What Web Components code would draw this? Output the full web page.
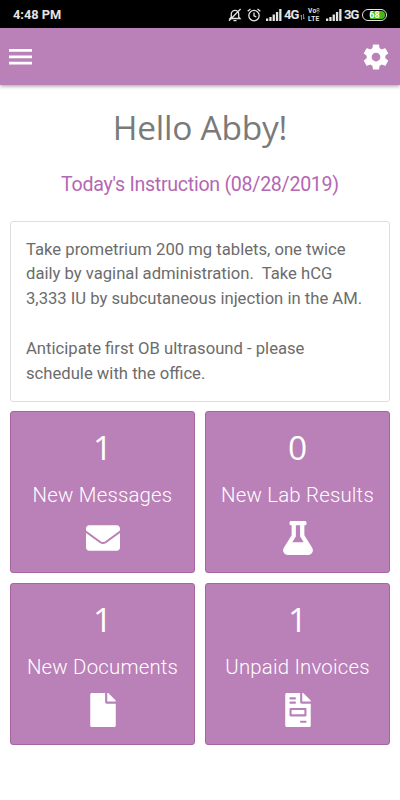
<!DOCTYPE html>
<html lang="en">
<head>
<meta charset="utf-8">
<meta name="viewport" content="width=device-width, initial-scale=1">
<title>Hello Abby!</title>
<style>
  body {
    margin: 0;
    background: #fff;
    font-family: Roboto, "Liberation Sans", sans-serif;
    color: #666;
  }
</style>
</head>
<body>
<patient-home></patient-home>

<script>
const ICONS = {
  menu: ['0 0 24 17', 'M0 0h23v2.8H0zM0 6.4h23v2.8H0zM0 12.8h23v2.8H0z'],
  gear: ['0 0 24 24', 'M19.43 12.98c.04-.32.07-.64.07-.98s-.03-.66-.07-.98l2.11-1.65c.19-.15.24-.42.12-.64l-2-3.46c-.12-.22-.39-.3-.61-.22l-2.49 1c-.52-.4-1.08-.73-1.69-.98l-.38-2.65C14.46 2.18 14.25 2 14 2h-4c-.25 0-.46.18-.49.42l-.38 2.65c-.61.25-1.17.59-1.69.98l-2.49-1c-.23-.09-.49 0-.61.22l-2 3.46c-.13.22-.07.49.12.64l2.11 1.65c-.04.32-.07.65-.07.98s.03.66.07.98l-2.11 1.65c-.19.15-.24.42-.12.64l2 3.46c.12.22.39.3.61.22l2.49-1c.52.4 1.08.73 1.69.98l.38 2.65c.03.24.24.42.49.42h4c.25 0 .46-.18.49-.42l.38-2.65c.61-.25 1.17-.59 1.69-.98l2.49 1c.23.09.49 0 .61-.22l2-3.46c.12-.22.07-.49-.12-.64l-2.11-1.65zM12 15.5c-1.93 0-3.5-1.57-3.5-3.5s1.57-3.5 3.5-3.5 3.5 1.57 3.5 3.5-1.57 3.5-3.5 3.5z'],
  envelope: ['0 0 512 512', 'M48 64C21.5 64 0 85.500 0 112v18c0 8 4 15 10 20l216 158c18 13 42 13 60 0l216-158c6-5 10-12 10-20v-18c0-26.500-21.500-48-48-48zM0 179v221c0 26.500 21.500 48 48 48h416c26.500 0 48-21.500 48-48V179L304 331c-29 21-67 21-96 0z'],
  flask: ['0 0 448 512', 'M437.2 403.5L320 215V64h8c13.3 0 24-10.7 24-24V24c0-13.3-10.7-24-24-24H120c-13.3 0-24 10.7-24 24v16c0 13.3 10.7 24 24 24h8v151L10.8 403.5C-18.5 450.6 15.3 512 70.9 512h306.2c55.7 0 89.4-61.5 60.1-108.5zM137.900 320l48.2-77.6c3.7-5.2 5.8-11.6 5.8-18.4V64h64v160c0 6.9 2.2 13.2 5.8 18.4l48.2 77.6h-172z'],
  file: ['0 0 384 512', 'M224 136V0H24C10.7 0 0 10.7 0 24v464c0 13.3 10.7 24 24 24h336c13.3 0 24-10.7 24-24V160H248c-13.2 0-24-10.8-24-24zm160-14.1v6.1H256V0h6.1c6.4 0 12.5 2.5 17 7l97.9 98c4.5 4.5 7 10.6 7 16.9z'],
  invoice: ['0 0 384 512', 'M288 256H96v64h192v-64zm89-151L279.1 7c-4.5-4.5-10.6-7-17-7H256v128h128v-6.1c0-6.3-2.5-12.4-7-16.9zm-153 31V0H24C10.7 0 0 10.7 0 24v464c0 13.3 10.7 24 24 24h336c13.3 0 24-10.7 24-24V160H248c-13.2 0-24-10.8-24-24zM64 72c0-4.42 3.58-8 8-8h80c4.42 0 8 3.58 8 8v16c0 4.42-3.58 8-8 8H72c-4.42 0-8-3.58-8-8V72zm0 64c0-4.42 3.58-8 8-8h80c4.42 0 8 3.58 8 8v16c0 4.42-3.58 8-8 8H72c-4.42 0-8-3.58-8-8v-16zm256 304c0 4.42-3.58 8-8 8h-80c-4.42 0-8-3.58-8-8v-16c0-4.42 3.58-8 8-8h80c4.42 0 8 3.58 8 8v16zm0-200v96c0 8.84-7.16 16-16 16H80c-8.84 0-16-7.16-16-16v-96c0-8.84 7.16-16 16-16h224c8.84 0 16 7.16 16 16z'],
  signal: ['0 0 16 12', 'M0 9.500h2.300V12H0zM3.300 8h2.300v4H3.300zM6.600 5.500h2.300V12H6.600zM9.900 3h2.300v9H9.900zM13.200 0h2.300v12h-2.300z'],
};

class AppIcon extends HTMLElement {
  connectedCallback() {
    const [viewBox, path] = ICONS[this.getAttribute('name')];
    this.attachShadow({ mode: 'open' }).innerHTML = `
      <style>
        :host { display: block; }
        svg { display: block; width: 100%; height: 100%; fill: currentColor; }
      </style>
      <svg viewBox="${viewBox}"><path d="${path}"/></svg>
    `;
  }
}

class StatusBar extends HTMLElement {
  connectedCallback() {
    this.attachShadow({ mode: 'open' }).innerHTML = `
      <style>
        :host {
          display: flex;
          align-items: center;
          box-sizing: border-box;
          height: 28px;
          padding: 1px 13px 0;
          background: #000;
          color: #e4e4e4;
          font-size: 12.8px;
          font-weight: 700;
          line-height: 14px;
        }
        .time { margin-right: auto; }
        svg { display: block; fill: none; stroke: currentColor; stroke-width: 1.3; }
        .bell, .alarm { margin-right: 5px; }
        app-icon { width: 16px; height: 12px; margin-right: 2px; }
        .net { width: 15px; font-size: 13px; letter-spacing: -.9px; }
        .arrows { margin: 5px 3px 0 1px; stroke-width: .8; opacity: .75; }
        .volte { width: 14px; margin-right: 4px; }
        .volte div {
          display: flex;
          height: 8px;
          font-size: 6.6px;
          line-height: 8px;
          letter-spacing: .3px;
        }
        .volte svg { margin-top: 1px; stroke-width: .9; }
        .battery {
          display: flex;
          align-items: center;
          justify-content: center;
          box-sizing: border-box;
          width: 25px;
          height: 12px;
          margin-left: 3px;
          padding: 1px;
          border: 1px solid #e4e4e4;
          border-radius: 6px;
          background: linear-gradient(90deg, #000 30%, #45b913 30%) content-box;
          color: #fff;
          font-size: 9px;
          line-height: 10px;
        }
      </style>
      <span class="time">4:48 PM</span>
      <svg class="bell" width="14" height="14" viewBox="0 0 14 14"><path d="M2 10.5h10L10.700 9V6a3.700 3.700 0 0 0-7.400 0v3zM5.500 12.700h3M12.600 1L1 12.800"/></svg>
      <svg class="alarm" width="14" height="14" viewBox="0 0 14 14"><circle cx="7" cy="7.6" r="5.2"/><path d="M7 4.600v3.300l2.300 1M.7 3.300L3.500 1M13.300 3.300L10.500 1"/></svg>
      <app-icon name="signal"></app-icon>
      <span class="net">4G</span>
      <svg class="arrows" width="5" height="6" viewBox="0 0 5 6"><path d="M1.500 6V1L.3 2.400M3.600 0v5l1.100-1.400"/></svg>
      <div class="volte">
        <div>Vo<svg width="4" height="6" viewBox="0 0 4 6"><path d="M.5 1.200Q2 0 3.500 1.200M.5 3.200Q2 2 3.500 3.200M2 4.500v1"/></svg></div>
        <div>LTE</div>
      </div>
      <app-icon name="signal"></app-icon>
      <span class="net">3G</span>
      <span class="battery">68</span>
    `;
  }
}

class AppHeader extends HTMLElement {
  connectedCallback() {
    this.attachShadow({ mode: 'open' }).innerHTML = `
      <style>
        :host {
          display: flex;
          align-items: center;
          justify-content: space-between;
          box-sizing: border-box;
          height: 57px;
          padding: 1px 9px 0;
          background: #ba80b8;
          color: #fff;
          box-shadow: 0 1px 4px rgba(0, 0, 0, .4);
        }
        .menu { width: 24px; height: 17px; }
        .gear { width: 30px; height: 30px; }
      </style>
      <app-icon class="menu" name="menu"></app-icon>
      <app-icon class="gear" name="gear"></app-icon>
    `;
  }
}

class InstructionCard extends HTMLElement {
  connectedCallback() {
    this.attachShadow({ mode: 'open' }).innerHTML = `
      <style>
        :host {
          display: block;
          box-sizing: border-box;
          height: 181px;
          padding: 15.5px 15px 0;
          border: 1px solid #dedede;
          border-radius: 3px;
          color: #6c6c6c;
          font-size: 16.65px;
          line-height: 24.9px;
          white-space: pre;
        }
      </style>
      <slot></slot>
    `.trim().replace(/>\s+<slot/, '><slot');
  }
}

class CountTile extends HTMLElement {
  connectedCallback() {
    this.attachShadow({ mode: 'open' }).innerHTML = `
      <style>
        :host {
          display: flex;
          flex-direction: column;
          align-items: center;
          box-sizing: border-box;
          height: 162px;
          border: 1px solid #a565a3;
          border-radius: 3px;
          background: #ba80b8;
          color: #fff;
        }
        .count {
          margin-top: 11px;
          font: 400 33.5px/48px "Open Sans", "Noto Sans", sans-serif;
        }
        .label {
          margin-top: 10px;
          font-size: 20.4px;
          font-weight: 300;
          line-height: 28px;
          letter-spacing: .2px;
          white-space: nowrap;
        }
        app-icon { width: 34px; height: 34px; margin-top: 12px; }
      </style>
      <div class="count">${this.getAttribute('count')}</div>
      <div class="label"><slot></slot></div>
      <app-icon name="${this.getAttribute('icon')}"></app-icon>
    `;
  }
}

class PatientHome extends HTMLElement {
  connectedCallback() {
    this.attachShadow({ mode: 'open' }).innerHTML = `
      <style>
        :host { display: block; min-height: 800px; }
        main { padding: 0 10px; }
        h1 {
          margin: 0;
          padding-top: 18px;
          color: #7a7a7a;
          font: 400 33.5px/48px "Open Sans", "Noto Sans", sans-serif;
          letter-spacing: -.25px;
          text-align: center;
        }
        h2 {
          margin: 20px 0 22px;
          color: #b467b2;
          font-size: 19.6px;
          font-weight: 400;
          line-height: 28px;
          letter-spacing: -.28px;
          text-align: center;
        }
        .tiles {
          display: grid;
          grid-template-columns: 1fr 1fr;
          gap: 10px;
          margin-top: 9px;
        }
      </style>
      <status-bar></status-bar>
      <app-header></app-header>
      <main>
        <h1>Hello Abby!</h1>
        <h2>Today's Instruction (08/28/2019)</h2>
        <instruction-card>Take prometrium 200 mg tablets, one twice
daily by vaginal administration.  Take hCG
3,333 IU by subcutaneous injection in the AM.

Anticipate first OB ultrasound - please
schedule with the office.</instruction-card>
        <div class="tiles">
          <count-tile count="1" icon="envelope">New Messages</count-tile>
          <count-tile count="0" icon="flask">New Lab Results</count-tile>
          <count-tile count="1" icon="file">New Documents</count-tile>
          <count-tile count="1" icon="invoice">Unpaid Invoices</count-tile>
        </div>
      </main>
    `;
  }
}

customElements.define('app-icon', AppIcon);
customElements.define('status-bar', StatusBar);
customElements.define('app-header', AppHeader);
customElements.define('instruction-card', InstructionCard);
customElements.define('count-tile', CountTile);
customElements.define('patient-home', PatientHome);
</script>
</body>
</html>
